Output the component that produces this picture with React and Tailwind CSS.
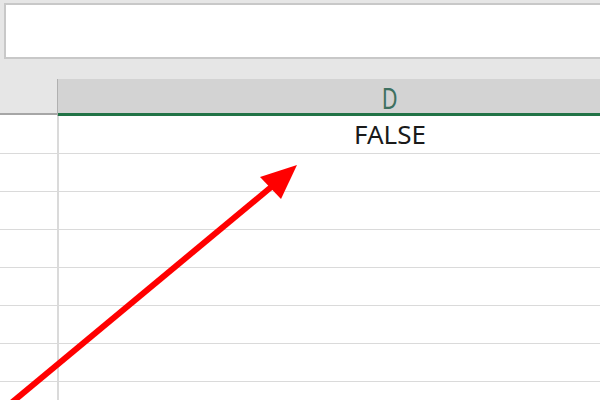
import React from 'react';

const rows = [0, 1, 2, 3, 4, 5, 6, 7];

export default function App() {
  return (
    <div className="relative w-[600px] h-[400px] overflow-hidden bg-white" style={{ fontFamily: '"Noto Sans", sans-serif' }}>
      {/* formula bar area */}
      <div className="h-[79px] bg-[#e6e6e6] pt-[3px] pl-[4px]">
        <div className="h-[56px] bg-white border-2 border-r-0 border-[#c8c8c8]" />
      </div>

      {/* header row */}
      <div className="flex h-[37px]">
        <div className="w-[57px] shrink-0 bg-[#e6e6e6] border-b-2 border-[#a6a6a6] mb-px" />
        <div className="w-px shrink-0 bg-[#b0b0b0]" />
        <div className="flex-1 min-w-0 overflow-hidden flex flex-col">
          <div className="flex-1 bg-[#d3d3d3] flex items-center">
            <div className="w-[664px] shrink-0 flex justify-center">
              <span className="text-[29px] leading-none text-[#3d7060] scale-x-75 inline-block mt-[2px]">D</span>
            </div>
          </div>
          <div className="h-[3px] bg-[#217346]" />
        </div>
      </div>

      {/* grid rows */}
      {rows.map((r) => (
        <div key={r} className="flex h-[38px] border-b border-[#dadada]">
          <div className="w-[57px] shrink-0 bg-white" />
          <div className="w-[2px] shrink-0 bg-[#dadada]" />
          <div className="flex-1 min-w-0 overflow-hidden">
            {r === 0 && (
              <div className="w-[662px] flex justify-center">
                <span className="text-[26px] leading-[37px] text-[#1a1a1a]">FALSE</span>
              </div>
            )}
          </div>
        </div>
      ))}

      {/* red arrow annotation */}
      <svg className="absolute inset-0 pointer-events-none" width="600" height="400" viewBox="0 0 600 400">
        <line x1="10" y1="404" x2="276" y2="183" stroke="#ff0000" strokeWidth="6" />
        <polygon points="297,165 260,177 281,199" fill="#ff0000" />
      </svg>
    </div>
  );
}
